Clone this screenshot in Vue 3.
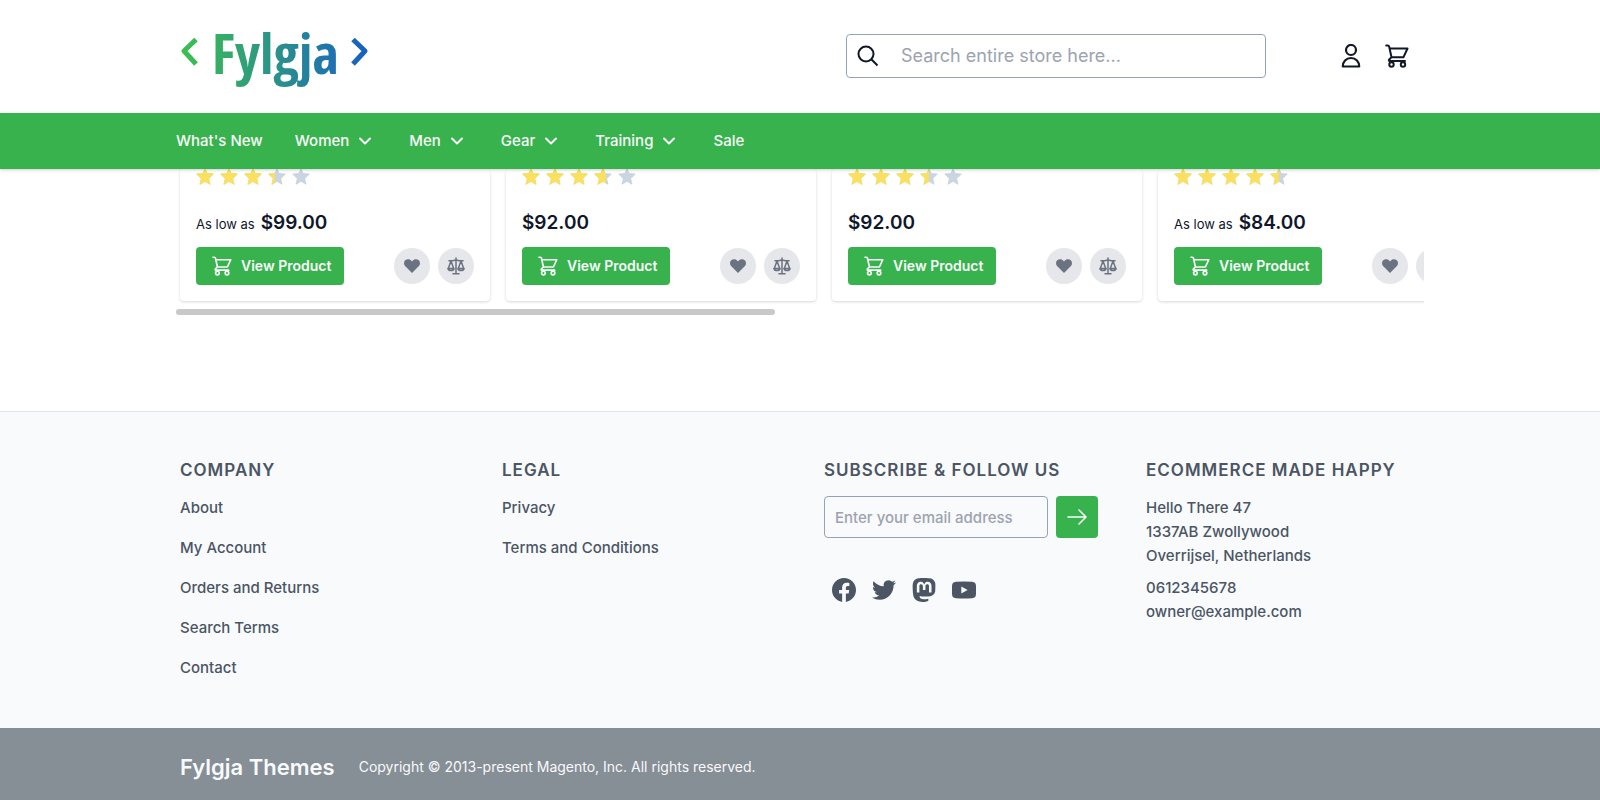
<script setup>
const navItems = [
  { label: "What's New", menu: false },
  { label: 'Women', menu: true },
  { label: 'Men', menu: true },
  { label: 'Gear', menu: true },
  { label: 'Training', menu: true },
  { label: 'Sale', menu: false },
]

const products = [
  { id: 1, price: '$99.00', from: true, rating: 3.4 },
  { id: 2, price: '$92.00', from: false, rating: 3.68 },
  { id: 3, price: '$92.00', from: false, rating: 3.5 },
  { id: 4, price: '$84.00', from: true, rating: 4.5 },
]

const companyLinks = ['About', 'My Account', 'Orders and Returns', 'Search Terms', 'Contact']
const legalLinks = ['Privacy', 'Terms and Conditions']

const fillOf = (rating, n) => Math.max(0, Math.min(1, rating - n + 1)) * 100 + '%'
</script>

<template>
  <div class="page">
    <svg class="defs" aria-hidden="true">
      <symbol id="cart" viewBox="0 0 24 24">
        <g fill="none" stroke="currentColor" stroke-linecap="round" stroke-linejoin="round">
          <path d="M1.200 1.500h1.600c.8 0 1.200.4 1.400 1.200L6.500 13.200M4.700 4.500H22.500l-4 8.700h-12l-2.300 2.300c-.7.8-.3 1.500.6 1.500H20" />
          <circle cx="6.500" cy="20.500" r="2.200" />
          <circle cx="18" cy="20.500" r="2.200" />
        </g>
      </symbol>
      <symbol id="star" viewBox="0 0 18 18">
        <path d="M9 .8 11.300 6l5.700.5c.6.1.8.7.4 1.100L13.100 11.400l1.300 5.500c.1.600-.4 1-.9.700L9 14.800l-4.500 2.800c-.5.300-1-.1-.9-.7l1.300-5.500L.6 7.600C.2 7.200.4 6.600 1 6.500L6.700 6z" />
      </symbol>
    </svg>

    <header class="header">
      <div class="container header-row">
        <a href="#" class="logo" aria-label="Fylgja">
          <svg width="196" height="110" viewBox="0 0 196 110">
            <defs>
              <linearGradient id="brand" gradientUnits="userSpaceOnUse" x1="6" y1="0" x2="190" y2="0">
                <stop offset="0" stop-color="#3cc04e" />
                <stop offset="0.5" stop-color="#2b9389" />
                <stop offset="1" stop-color="#1560c4" />
              </linearGradient>
            </defs>
            <g fill="none" stroke="url(#brand)" stroke-width="5" stroke-linejoin="round">
              <path d="M20 38.500 8 50 20 63" />
              <path d="M177 38.500 189 50 177 63" />
            </g>
            <text class="wordmark" x="36" y="73" fill="url(#brand)">Fylgja</text>
          </svg>
        </a>
        <form class="search" role="search" @submit.prevent>
          <button type="submit" class="search-button" aria-label="Search">
            <svg width="22" height="22" viewBox="0 0 22 22" fill="none" stroke="currentColor" stroke-width="2">
              <circle cx="9" cy="9" r="7.500" />
              <path d="m14.300 14.300 6.200 6.200" />
            </svg>
          </button>
          <input type="search" class="search-input" aria-label="Search" placeholder="Search entire store here..." />
        </form>
        <div class="tools">
          <button type="button" class="tool" aria-label="My account">
            <svg width="24" height="24" viewBox="0 0 24 24" fill="none" stroke="currentColor" stroke-width="2.200">
              <circle cx="12" cy="6" r="5" />
              <path d="M12 14c5 0 8.200 3.600 8.200 8.500H3.800C3.800 17.600 7 14 12 14z" stroke-linejoin="round" />
            </svg>
          </button>
          <button type="button" class="tool cart-tool" aria-label="Cart">
            <svg width="24" height="24"><use href="#cart" /></svg>
          </button>
        </div>
      </div>
    </header>

    <nav class="nav" aria-label="Main">
      <ul class="container nav-list">
        <li v-for="item in navItems" :key="item.label">
          <a href="#" class="nav-link" :class="{ parent: item.menu }">
            {{ item.label }}
            <svg v-if="item.menu" width="12" height="12" viewBox="0 0 12 12" fill="none" stroke="currentColor" stroke-width="2" stroke-linecap="round" stroke-linejoin="round">
              <path d="m1 3.500 5 5 5-5" />
            </svg>
          </a>
        </li>
      </ul>
    </nav>

    <main class="container">
      <div class="slider">
        <article v-for="p in products" :key="p.id" class="card">
          <div class="stars" role="img" :aria-label="p.rating + ' out of 5'">
            <span v-for="n in 5" :key="n" class="star">
              <svg width="18" height="18"><use href="#star" /></svg>
              <span class="star-fill" :style="{ width: fillOf(p.rating, n) }">
                <svg width="18" height="18"><use href="#star" /></svg>
              </span>
            </span>
          </div>
          <div class="price"><span v-if="p.from" class="from">As low as</span><strong>{{ p.price }}</strong></div>
          <div class="actions">
            <button type="button" class="view">
              <svg width="20" height="20"><use href="#cart" /></svg>
              View Product
            </button>
            <button type="button" class="round push" aria-label="Add to wish list">
              <svg width="16" height="16" viewBox="0 0 16 16" fill="currentColor">
                <path d="M8 15 1.300 8.300C-.4 6.500-.4 3.800 1.200 2.300c1.700-1.600 4.300-1.500 5.900.2L8 3.400l.9-.9c1.600-1.700 4.200-1.800 5.900-.2 1.600 1.500 1.600 4.200-.1 6z" />
              </svg>
            </button>
            <button type="button" class="round" aria-label="Add to compare">
              <svg width="18" height="18" viewBox="0 0 18 18" fill="none" stroke="currentColor" stroke-width="1.500" stroke-linecap="round" stroke-linejoin="round">
                <path d="M9 1v15.500M6 16.700h6M2 3.700h3.500L9 3l3.500.7H16M4 4 1.300 11.500M4 4l2.700 7.500M14 4l-2.700 7.500M14 4l2.700 7.500" />
                <path d="M1 11.500h6c-.3 1.500-1.500 2.100-3 2.100s-2.700-.6-3-2.100zM11 11.500h6c-.3 1.500-1.500 2.100-3 2.100s-2.700-.6-3-2.100z" />
              </svg>
            </button>
          </div>
        </article>
      </div>
      <div class="scrollbar"></div>
    </main>

    <footer class="footer">
      <div class="container columns">
        <section>
          <h2>Company</h2>
          <ul class="links">
            <li v-for="l in companyLinks" :key="l"><a href="#">{{ l }}</a></li>
          </ul>
        </section>
        <section>
          <h2>Legal</h2>
          <ul class="links">
            <li v-for="l in legalLinks" :key="l"><a href="#">{{ l }}</a></li>
          </ul>
        </section>
        <section>
          <h2>Subscribe &amp; Follow us</h2>
          <form class="subscribe" @submit.prevent>
            <input type="email" aria-label="Email address" placeholder="Enter your email address" />
            <button type="submit" aria-label="Subscribe">
              <svg width="20" height="16" viewBox="0 0 20 16" fill="none" stroke="currentColor" stroke-width="1.600" stroke-linecap="round" stroke-linejoin="round">
                <path d="M1 8h18M12 1l7 7-7 7" />
              </svg>
            </button>
          </form>
          <div class="social">
            <a href="#" aria-label="Facebook">
              <svg width="24" height="24" viewBox="0 0 24 24" fill="currentColor"><path d="M24 12.073c0-6.627-5.373-12-12-12s-12 5.373-12 12c0 5.990 4.388 10.954 10.125 11.854v-8.385H7.078v-3.470h3.047V9.430c0-3.007 1.792-4.669 4.533-4.669 1.312 0 2.686.235 2.686.235v2.953H15.830c-1.491 0-1.956.925-1.956 1.874v2.250h3.328l-.532 3.470h-2.796v8.385C19.612 23.027 24 18.062 24 12.073z" /></svg>
            </a>
            <a href="#" aria-label="Twitter">
              <svg width="24" height="24" viewBox="0 0 24 24" fill="currentColor"><path d="M23.953 4.570a10 10 0 01-2.825.775 4.958 4.958 0 002.163-2.723c-.951.555-2.005.959-3.127 1.184a4.920 4.920 0 00-8.384 4.482C7.690 8.095 4.067 6.130 1.640 3.162a4.822 4.822 0 00-.666 2.475c0 1.710.870 3.213 2.188 4.096a4.904 4.904 0 01-2.228-.616v.060a4.923 4.923 0 003.946 4.827 4.996 4.996 0 01-2.212.085 4.936 4.936 0 004.604 3.417 9.867 9.867 0 01-6.102 2.105c-.390 0-.779-.023-1.170-.067a13.995 13.995 0 007.557 2.209c9.053 0 13.998-7.496 13.998-13.985 0-.210 0-.420-.015-.630A9.935 9.935 0 0024 4.590z" /></svg>
            </a>
            <a href="#" aria-label="Mastodon">
              <svg width="24" height="24" viewBox="0 0 24 24" fill="currentColor"><path d="M23.268 5.313c-.350-2.578-2.617-4.610-5.304-5.004C17.510.242 15.792 0 11.813 0h-.030c-3.980 0-4.835.242-5.288.309C3.882.692 1.496 2.518.917 5.127.640 6.412.610 7.837.661 9.143c.074 1.874.088 3.745.260 5.611.118 1.240.325 2.470.620 3.680.550 2.237 2.777 4.098 4.960 4.857 2.336.792 4.849.923 7.256.380.265-.061.527-.132.786-.213.585-.184 1.270-.390 1.774-.753a.057.057 0 0 0 .023-.043v-1.809a.052.052 0 0 0-.020-.041.053.053 0 0 0-.046-.010 20.282 20.282 0 0 1-4.709.545c-2.730 0-3.463-1.284-3.674-1.818a5.593 5.593 0 0 1-.319-1.433.053.053 0 0 1 .066-.054c1.517.363 3.072.546 4.632.546.376 0 .750 0 1.125-.010 1.570-.044 3.224-.124 4.768-.422.038-.008.077-.015.110-.024 2.435-.464 4.753-1.920 4.989-5.604.008-.145.030-1.520.030-1.670.002-.512.167-3.630-.024-5.545zm-3.748 9.195h-2.561V8.290c0-1.309-.550-1.976-1.670-1.976-1.230 0-1.846.790-1.846 2.350v3.403h-2.546V8.663c0-1.560-.617-2.350-1.848-2.350-1.112 0-1.668.668-1.670 1.977v6.218H4.822V8.102c0-1.310.337-2.350 1.011-3.120.696-.770 1.608-1.164 2.740-1.164 1.311 0 2.302.500 2.962 1.498l.638 1.060.638-1.060c.660-.999 1.650-1.498 2.960-1.498 1.130 0 2.043.395 2.740 1.164.675.770 1.012 1.810 1.012 3.120z" /></svg>
            </a>
            <a href="#" aria-label="YouTube">
              <svg width="24" height="24" viewBox="0 0 24 24" fill="currentColor" fill-rule="evenodd"><path d="M4 3.800Q12 3.200 20 3.800C23 4 24 5.500 24 8.500v7c0 3-1 4.500-4 4.700q-8 .6-16 0C1 20 0 18.500 0 15.500v-7C0 5.500 1 4 4 3.800zM9.300 8.600v6.800l6.300-3.400z" /></svg>
            </a>
          </div>
        </section>
        <section>
          <h2>Ecommerce made happy</h2>
          <address>
            Hello There 47<br />1337AB Zwollywood<br />Overrijsel, Netherlands
          </address>
          <div class="contact">
            <a href="tel:0612345678">0612345678</a>
            <a href="mailto:owner@example.com">owner@example.com</a>
          </div>
        </section>
      </div>
    </footer>

    <div class="legal-bar">
      <div class="container legal-row">
        <strong>Fylgja Themes</strong>
        <small>Copyright © 2013-present Magento, Inc. All rights reserved.</small>
      </div>
    </div>
  </div>
</template>

<style>
body {
  background: #fff;
}
</style>

<style scoped>
.page,
.page * {
  box-sizing: border-box;
}
.page {
  font-family: Inter, "Liberation Sans", sans-serif;
  font-size: 15px;
  line-height: 24px;
  color: #0f172a;
}
.defs {
  position: absolute;
  width: 0;
  height: 0;
}
svg {
  display: block;
  flex: none;
}
a {
  color: inherit;
  text-decoration: none;
}
ul {
  margin: 0;
  padding: 0;
  list-style: none;
}
button,
input {
  font: inherit;
  color: inherit;
  margin: 0;
}
button {
  border: 0;
  padding: 0;
  background: none;
  cursor: pointer;
}
.container {
  max-width: 1248px;
  margin: 0 auto;
}
.header-row {
  display: flex;
  align-items: center;
  min-height: 113px;
  padding: 0 15px 1px 0;
}
.wordmark {
  font-family: "Liberation Sans Narrow", "Open Sans Condensed", Lato, sans-serif;
  font-size: 56px;
  font-weight: 700;
}
.search {
  display: flex;
  align-items: center;
  width: 420px;
  height: 44px;
  margin-left: auto;
  border: 1px solid #94a3b8;
  border-radius: 4px;
}
.search-button {
  padding: 0 12px 0 10px;
  color: #111827;
}
.search-input {
  flex: 1;
  min-width: 0;
  padding: 0 10px;
  border: 0;
  background: none;
  font-size: 18px;
  outline: 0;
}
input::placeholder {
  color: #9ca3af;
  opacity: 1;
}
.tools {
  display: flex;
  gap: 22px;
  margin-left: 73px;
  color: #111827;
}
.cart-tool {
  stroke-width: 2px;
}
.nav {
  position: relative;
  z-index: 1;
  background: #38b24c;
  color: #f8fafc;
  box-shadow: 0 1px 3px rgba(0, 0, 0, 0.2);
}
.nav-list {
  display: flex;
  gap: 32px;
}
.nav-link {
  display: flex;
  align-items: center;
  gap: 10px;
  height: 56px;
  font-weight: 500;
}
.parent {
  padding-right: 6px;
}
.slider {
  display: flex;
  gap: 16px;
  overflow: hidden;
  padding: 0 4px 8px;
}
.card {
  flex: 0 0 310px;
  padding: 0 16px 16px;
  border-radius: 4px;
  box-shadow: 0 1px 3px rgba(0, 0, 0, 0.16);
}
.stars {
  display: flex;
  gap: 6px;
  height: 16px;
  align-items: flex-end;
  color: #cbd5e1;
}
.star {
  position: relative;
}
.star-fill {
  position: absolute;
  inset: 0 auto 0 0;
  overflow: hidden;
  color: #fae05e;
}
.star svg {
  fill: currentColor;
}
.price {
  display: flex;
  align-items: baseline;
  gap: 6px;
  margin: 24px 0 10px;
  line-height: 28px;
}
.price strong {
  font-size: 19px;
  font-weight: 600;
}
.from {
  font-size: 13px;
  line-height: 20px;
}
.actions {
  display: flex;
  align-items: center;
  gap: 8px;
}
.view {
  display: flex;
  align-items: center;
  gap: 9px;
  height: 38px;
  padding: 0 13px 0 16px;
  border-radius: 4px;
  background: #38b24c;
  color: #f8fafc;
  font-size: 14px;
  font-weight: 600;
  stroke-width: 2px;
  white-space: nowrap;
}
.round {
  display: grid;
  place-items: center;
  flex: none;
  width: 36px;
  height: 36px;
  border-radius: 50%;
  background: #e5e7eb;
  color: #6b7280;
}
.push {
  margin-left: auto;
}
.scrollbar {
  width: 48%;
  height: 6px;
  border-radius: 3px;
  background: #c9c9c9;
}
.footer {
  margin-top: 96px;
  padding: 44px 0 48px;
  border-top: 1px solid #e2e5ea;
  background: #f8fafc;
  color: #4b5563;
}
.columns {
  display: grid;
  grid-template-columns: repeat(4, minmax(0, 1fr));
  gap: 48px;
  padding: 0 4px;
}
h2 {
  margin: 0 0 12px;
  font-size: 17px;
  line-height: 28px;
  font-weight: 600;
  letter-spacing: 1px;
  text-transform: uppercase;
  white-space: nowrap;
}
.links {
  display: grid;
  gap: 16px;
}
.links,
.subscribe,
address,
.contact {
  font-weight: 450;
}
.subscribe {
  display: flex;
  gap: 8px;
}
.subscribe input {
  flex: 1;
  min-width: 0;
  height: 42px;
  padding: 0 10px;
  border: 1px solid #94a3b8;
  border-radius: 4px;
  background: none;
}
.subscribe button {
  display: grid;
  place-items: center;
  width: 42px;
  border-radius: 4px;
  background: #38b24c;
  color: #f8fafc;
}
.social {
  display: flex;
  gap: 16px;
  padding: 40px 8px 0;
}
address {
  font-style: normal;
}
.contact {
  display: grid;
  justify-items: start;
  margin-top: 8px;
}
.legal-bar {
  background: #868e96;
  color: #f8fafc;
}
.legal-row {
  display: flex;
  align-items: center;
  gap: 24px;
  min-height: 72px;
  padding: 6px 4px 0;
}
.legal-row strong {
  font-size: 22px;
  font-weight: 600;
}
.legal-row small {
  font-size: 14px;
}
</style>
